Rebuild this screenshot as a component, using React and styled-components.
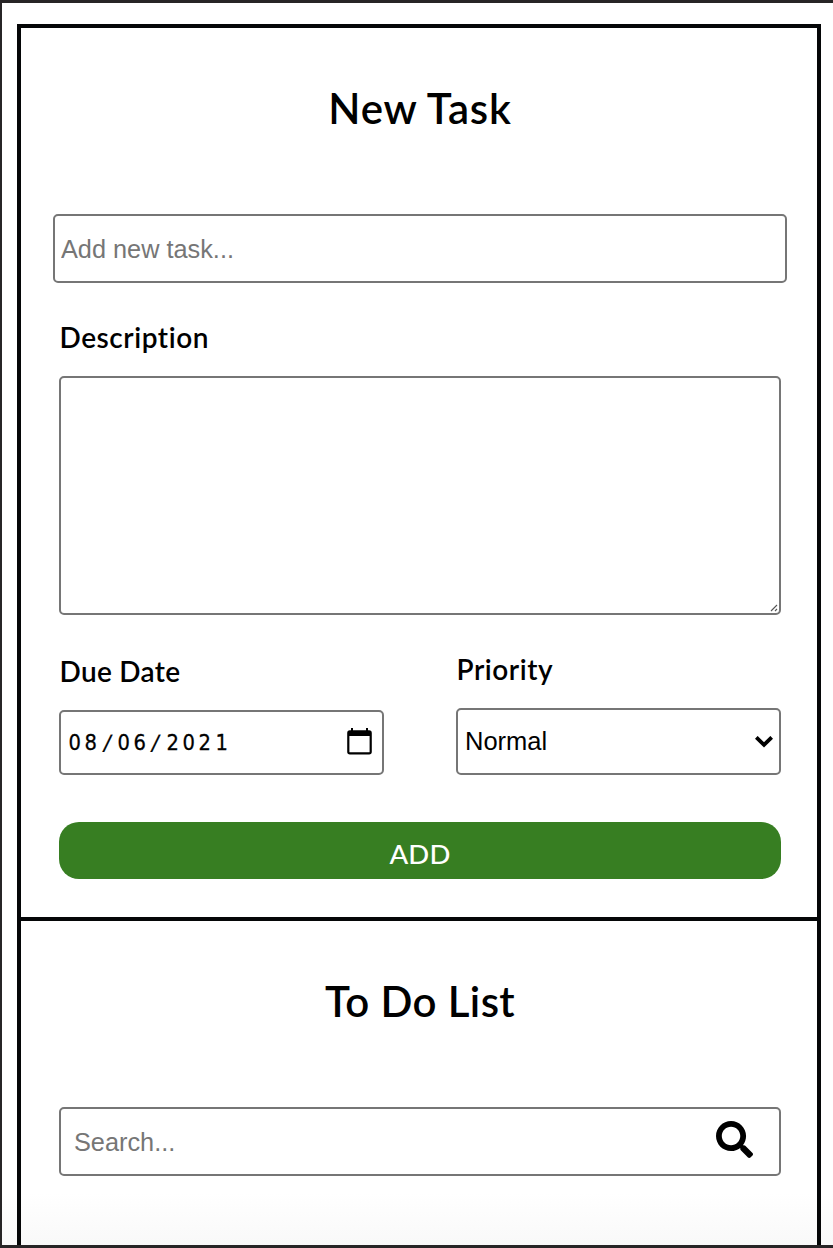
import React from "react";
import styled, { createGlobalStyle } from "styled-components";
import { FaSearch } from "react-icons/fa";

const GlobalStyle = createGlobalStyle`
  * { box-sizing: border-box; }
  body {
    margin: 0;
    background: #fff;
    color: #000;
    font-family: Lato, sans-serif;
    font-variant-ligatures: none;
  }
`;

const Page = styled.div`
  height: 1248px;
  overflow: hidden;
  border: solid #272526;
  border-width: 3px 0 3px 2px;
  padding: 21px 12px 0 15px;
  background: linear-gradient(#fff 1190px, #f9f9f9 1242px);
`;

const Board = styled.main`
  height: 100%;
  border: 4px solid #050607;
  border-bottom: 0;
`;

const Panel = styled.section`
  display: flex;
  flex-direction: column;
  height: ${(p) => p.$height || "auto"};
  padding: 0 36px 0 38px;
  border-bottom: ${(p) => (p.$divided ? "4px solid #050607" : "0")};
`;

const Title = styled.h1`
  margin: 52px 0 0;
  height: 57px;
  line-height: 56px;
  text-align: center;
  font-size: 42px;
  font-weight: 600;
  letter-spacing: ${(p) => p.$spacing};
`;

const Label = styled.label`
  display: block;
  height: 36px;
  line-height: 35px;
  padding-left: 0.5px;
  font-size: 28px;
  font-weight: 600;
  letter-spacing: ${(p) => p.$spacing};
`;

const fieldBorder = `
  border: 2px solid #767676;
  border-radius: 5px;
  background: #fff;
  outline: none;
`;

const TaskInput = styled.input`
  ${fieldBorder}
  height: 69px;
  margin: 77px -6px 0;
  padding: 3px 6px 1px;
  font: 25.3px "Liberation Sans", sans-serif;
  &::placeholder { color: #767676; opacity: 1; }
`;

const DescriptionWrap = styled.div`
  position: relative;
  margin-top: 37px;
`;

const Description = styled.textarea`
  ${fieldBorder}
  display: block;
  width: 100%;
  height: 239px;
  margin: 20px 0 0;
  resize: none;
`;

const Grip = styled.svg`
  position: absolute;
  right: 3px;
  bottom: 3px;
`;

const Row = styled.div`
  display: flex;
  justify-content: space-between;
  align-items: flex-end;
  margin-top: 38px;
  height: 122px;
`;

const Field = styled.div`
  width: 325px;
`;

const Control = styled.div`
  ${fieldBorder}
  display: flex;
  align-items: center;
  justify-content: space-between;
  height: ${(p) => p.$height};
  margin-top: 20px;
  padding: 0 ${(p) => p.$right} 0 7px;
  font: 25.5px "Liberation Sans", sans-serif;
`;

const DateText = styled.span`
  display: flex;
  font: 21px "DejaVu Sans", sans-serif;
  -webkit-text-stroke: 0.3px #000;
`;

const DateChar = styled.span`
  width: 16.3px;
  transform: ${(p) => (p.$slash ? "translateX(3px) skewX(-10deg)" : "scaleX(0.93)")};
`;

const CalendarIcon = styled.svg`
  margin-bottom: 4px;
`;

const AddButton = styled.button`
  height: 57px;
  margin-top: 47px;
  border: 0;
  border-radius: 20px;
  background: #377e22;
  color: #fff;
  font: 500 27.5px Lato, sans-serif;
  letter-spacing: 0.2px;
  padding: 6px 0 0;
`;

const SearchBox = styled.div`
  ${fieldBorder}
  display: flex;
  align-items: center;
  height: 69px;
  margin-top: 77px;
  padding: 0 26px 0 13px;
`;

const SearchInput = styled.input`
  flex: 1;
  min-width: 0;
  border: 0;
  padding: 2px 0 0;
  outline: none;
  background: transparent;
  font: 25.3px "Liberation Sans", sans-serif;
  &::placeholder { color: #767676; opacity: 1; }
`;

const SearchIcon = styled(FaSearch)`
  width: 37px;
  height: 37px;
  margin-top: -4px;
`;

const DATE = "08/06/2021";

export default function App() {
  return (
    <>
      <GlobalStyle />
      <Page>
        <Board>
          <Panel $height="893px" $divided>
            <Title $spacing="0.8px">New Task</Title>
            <TaskInput placeholder="Add new task..." />
            <DescriptionWrap>
              <Label htmlFor="description" $spacing="0.55px">Description</Label>
              <Description id="description" />
              <Grip width="8" height="8" viewBox="0 0 8 8" stroke="#555" strokeWidth="1.1">
                <path d="M1 7 7 1M5 7 7 5" />
              </Grip>
            </DescriptionWrap>
            <Row>
              <Field>
                <Label $spacing="0.3px">Due Date</Label>
                <Control $height="65px" $right="10px">
                  <DateText>
                    {[...DATE].map((c, i) => (
                      <DateChar key={i} $slash={c === "/"}>{c}</DateChar>
                    ))}
                  </DateText>
                  <CalendarIcon width="25" height="28" viewBox="0 0 25 28">
                    <path d="M4 1h2v3H4zM19 1h2v3h-2z" />
                    <rect x="1.3" y="4.3" width="22.4" height="22" rx="1.6" fill="none" stroke="#000" strokeWidth="2.2" />
                    <path d="M1 4h23v5H1z" />
                  </CalendarIcon>
                </Control>
              </Field>
              <Field>
                <Label $spacing="0.55px">Priority</Label>
                <Control $height="67px" $right="6px">
                  Normal
                  <svg width="18" height="12" viewBox="0 0 18 12" fill="none" stroke="#000" strokeWidth="3.8">
                    <path d="m1.3 1.3 7.7 7.5 7.7-7.5" />
                  </svg>
                </Control>
              </Field>
            </Row>
            <AddButton>ADD</AddButton>
          </Panel>
          <Panel>
            <Title $spacing="0.4px">To Do List</Title>
            <SearchBox>
              <SearchInput placeholder="Search..." />
              <SearchIcon />
            </SearchBox>
          </Panel>
        </Board>
      </Page>
    </>
  );
}
